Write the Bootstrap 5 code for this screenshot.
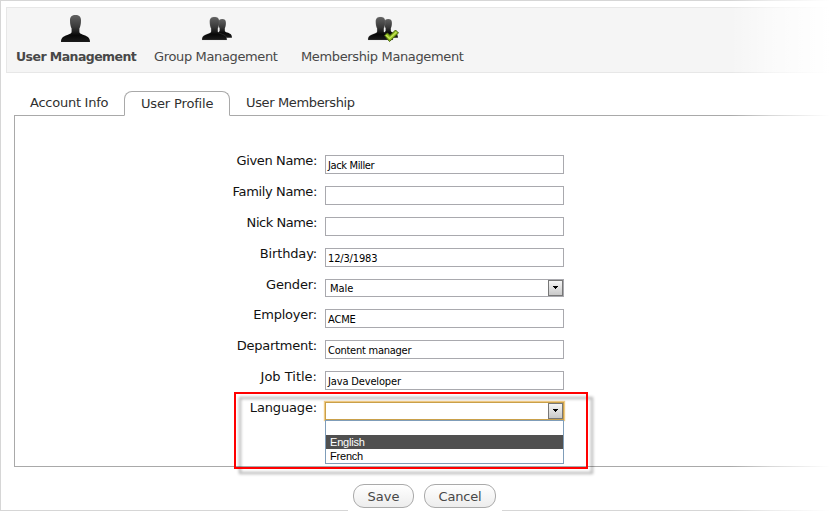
<!DOCTYPE html>
<html lang="en">
<head>
<meta charset="utf-8">
<meta name="viewport" content="width=device-width, initial-scale=1">
<title>User Management</title>
<link href="https://cdn.jsdelivr.net/npm/bootstrap@5.3.0/dist/css/bootstrap.min.css" rel="stylesheet">
<style>
body{width:834px;height:511px;overflow:hidden;background:#fff;color:#111;font:13px/16px "DejaVu Sans",Verdana,sans-serif}
.frame{height:511px;border:solid #d6d6d6;border-width:1px 0 1px 1px}
.fade-edge{inset:0 0 0 auto;width:104px;background:linear-gradient(90deg,rgba(255,255,255,0),rgba(255,255,255,.55) 40%,#fff 96%);z-index:5;pointer-events:none}
.toolbar{margin:6px 0 0 5px;height:66px;background:#f5f5f5;border:solid #e7e7e7;border-width:1px 0 1px 1px;padding:5px 0 0 9px;gap:19px}
.toolbar .nav-link{color:#484848;padding:0}
.toolbar .third{margin-left:4px}
.toolbar svg{display:block;height:32px;overflow:visible}
.toolbar span{display:block;margin-top:3px;line-height:17px;white-space:nowrap}
.toolbar .nav-link:nth-child(1){width:119px}
.toolbar .nav-link:nth-child(2){width:124px}
.toolbar .nav-link:nth-child(3){width:162px}
.toolbar .current span{font-weight:700;font-size:12.5px;letter-spacing:-.56px}
.profile-tabs{margin:18px 0 0 13px;height:25px;border:0;position:relative;z-index:1;flex-wrap:nowrap}
.profile-tabs .nav-link{color:#303030;border:0;border-radius:0;border-bottom:1px solid #a9a9a9;padding:3px 0 0;height:25px;line-height:17px;white-space:nowrap;margin:0;background:none}
.profile-tabs .first{width:110px;padding-left:16px}
.profile-tabs .nav-link.active{width:106px;border:1px solid #a9a9a9;border-bottom-color:#fff;border-radius:8px 8px 0 0;padding-left:16px;background:#fff;color:#303030}
.profile-tabs .last{flex:1;padding-left:16px}
.tight-1{letter-spacing:-.15px}.tight-2{letter-spacing:-.25px}.tight-3{letter-spacing:-.36px}.tight-4{letter-spacing:-.45px}
.panel{margin-left:13px;height:351px;border:solid #a9a9a9;border-width:0 0 1px 1px;padding-top:39px}
.field{height:31px}
.field.short{height:30px}
.field label{width:302px;text-align:right;line-height:15px;margin-top:-2px;white-space:nowrap}
.box{width:239px;height:19px;margin-left:8px;border:1px solid #a9a9ae;background:#fff;font:11px/19px "DejaVu Sans Condensed","DejaVu Sans",Tahoma,sans-serif;font-stretch:condensed;padding:0 2px;color:#000;white-space:nowrap}
.field .pick{height:18px;line-height:17px;padding:0 0 0 4px}
.arrow{width:15px;height:16px;border:1px solid #777;background:linear-gradient(#f5f5f5,#c9c9c9)}
.arrow svg{display:block}
.field .focused{border-color:#c9a04a;box-shadow:0 0 1px 1px #f1cb83;position:relative}
.options{top:17px;left:-1px;width:239px;height:44px;border:1px solid #7f9db9;background:#fff;font:11px/14px "Liberation Sans",Arial,sans-serif;letter-spacing:-.2px;z-index:2}
.options div{height:14px;padding-left:4px}
.options .chosen{background:#505050;color:#fff}
.callout{left:234px;top:392px;width:354px;height:77px;border:2px solid #f00;filter:drop-shadow(5px 5px 1.5px rgba(0,0,0,.32));z-index:4;pointer-events:none}
.actions{width:154px;height:30px;margin:16px 0 0 347px;padding:1px 0 0 5px;gap:10px;background:#fff;position:relative;z-index:3}
.actions .btn{--bs-btn-border-color:#aaa;--bs-btn-color:#484848;height:24px;border-radius:11px;padding:0;font:13px/21px "DejaVu Sans",Verdana,sans-serif;background:linear-gradient(#fff,#ededed)}
.actions .w-save{width:61px}
.actions .w-cancel{width:72px;letter-spacing:-.2px}
</style>
</head>
<body class="position-relative">
<svg width="0" height="0" class="position-absolute">
<defs>
<linearGradient id="dark" x2="0" y2="1"><stop stop-color="#626262"/><stop offset=".45" stop-color="#383838"/><stop offset=".75" stop-color="#080808"/><stop offset="1" stop-color="#1b1b1b"/></linearGradient>
<path id="person" d="M9 5.500C9 1.500 11 0 14.500 0S20 1.500 20 5.500c0 3.500-.6 6-1.600 8v3.500c0 1.300 1.300 1.800 3.600 2.700 4 1.500 7 2.300 7 7.300H0c0-5 3-5.800 7-7.300 2.300-.9 3.600-1.400 3.600-2.700v-3.500c-1-2-1.600-4.500-1.600-8z"/>
<g id="pair"><use href="#person" fill="url(#dark)" transform="translate(10.500 2) scale(.67 .69)"/><use href="#person" fill="url(#dark)" stroke="#999" stroke-opacity=".5" stroke-width=".4" transform="scale(.86 .85)"/></g>
</defs>
</svg>
<div class="frame">
<nav class="toolbar nav flex-nowrap">
<a class="nav-link current"><svg width="119"><use href="#person" fill="url(#dark)" x="45" y="2"/></svg><span>User Management</span></a>
<a class="nav-link"><svg width="124"><use href="#pair" x="48" y="4"/></svg><span class="tight-3">Group Management</span></a>
<a class="nav-link third"><svg width="162"><use href="#pair" x="67" y="4"/><path d="M83.500 22.500l3-2.500 2.500 2.500 5.500-5.500 3 3L88.500 28.500z" fill="#8fbc1e" stroke="#46610f" stroke-width="1" stroke-linejoin="round"/><path d="M85 22l3.500 3.500 7-6.500" fill="none" stroke="#c6e35c" stroke-width="1.200"/></svg><span class="tight-3">Membership Management</span></a>
</nav>
<nav class="nav nav-tabs profile-tabs">
<a class="nav-link first tight-2">Account Info</a><a class="nav-link active tight-1">User Profile</a><a class="nav-link last tight-3">User Membership</a>
</nav>
<main class="panel">
<div class="field d-flex"><label class="tight-3">Given Name:</label><div class="box tight-3">Jack Miller</div></div>
<div class="field d-flex"><label class="tight-3">Family Name:</label><div class="box"></div></div>
<div class="field d-flex"><label class="tight-4">Nick Name:</label><div class="box"></div></div>
<div class="field d-flex"><label class="tight-1">Birthday:</label><div class="box tight-1">12/3/1983</div></div>
<div class="field short d-flex"><label class="tight-1">Gender:</label><div class="box pick d-flex justify-content-between">Male<i class="arrow"><svg width="13" height="14"><path d="M4 5h5v1H8v1H7v1H6V7H5V6H4z"/></svg></i></div></div>
<div class="field d-flex"><label class="tight-2">Employer:</label><div class="box tight-1">ACME</div></div>
<div class="field d-flex"><label class="tight-2">Department:</label><div class="box tight-2">Content manager</div></div>
<div class="field d-flex"><label>Job Title:</label><div class="box tight-1">Java Developer</div></div>
<div class="field d-flex"><label class="tight-1">Language:</label><div class="box pick focused d-flex justify-content-end"><i class="arrow"><svg width="13" height="14"><path d="M4 5h5v1H8v1H7v1H6V7H5V6H4z"/></svg></i>
<div class="options position-absolute"><div></div><div class="chosen">English</div><div>French</div></div></div></div>
</main>
<div class="actions d-flex"><button class="btn w-save" type="button">Save</button><button class="btn w-cancel" type="button">Cancel</button></div>
</div>
<div class="callout position-absolute"></div>
<div class="fade-edge position-absolute"></div>
</body>
</html>
